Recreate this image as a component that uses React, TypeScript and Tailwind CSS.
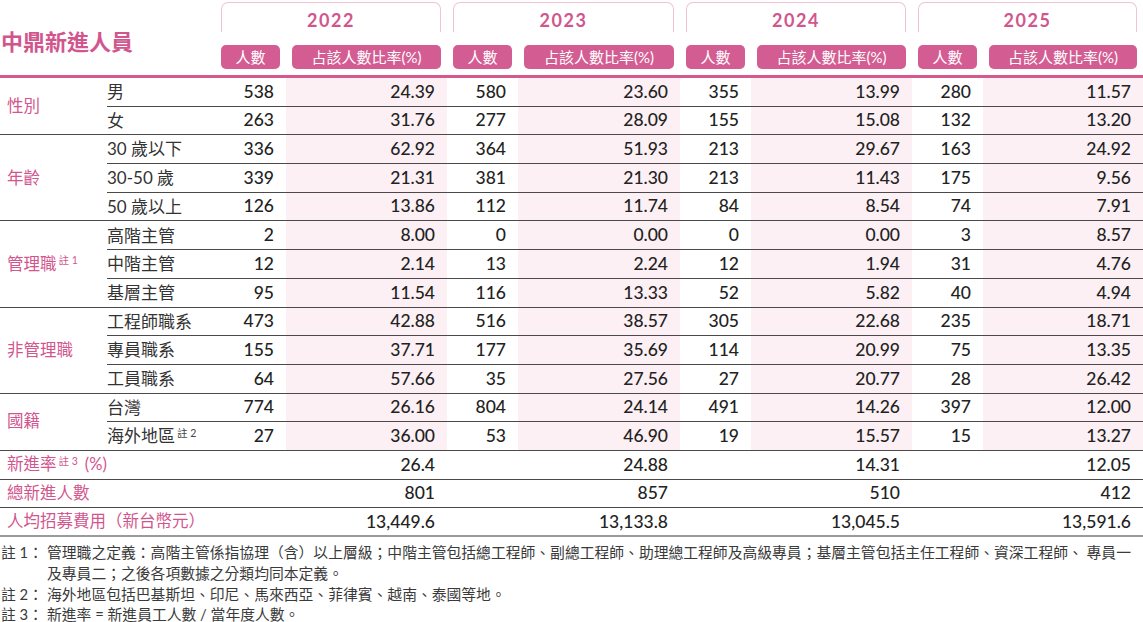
import React from "react";

const pink = "text-[#d2568e]";
const countW = ["w-[71px]", "w-[71px]", "w-[71px]", "w-[71px]"];
const pctW = ["w-[161px]", "w-[162px]", "w-[161px]", "w-[160px]"];
const blockW = ["w-[232px]", "w-[233px]", "w-[232px]", "w-[231px]"];
const years = ["2022", "2023", "2024", "2025"];

type Row = { label: React.ReactNode; v: [string, string][] };
type Group = { label: React.ReactNode; rows: Row[] };

const Note = ({ n, pinkish }: { n: number; pinkish?: boolean }) => (
  <sup className={`ml-[2px] text-[10.5px] ${pinkish ? pink : "text-[#444]"}`}>註 {n}</sup>
);

const groups: Group[] = [
  {
    label: "性別",
    rows: [
      { label: "男", v: [["538", "24.39"], ["580", "23.60"], ["355", "13.99"], ["280", "11.57"]] },
      { label: "女", v: [["263", "31.76"], ["277", "28.09"], ["155", "15.08"], ["132", "13.20"]] },
    ],
  },
  {
    label: "年齡",
    rows: [
      { label: "30 歲以下", v: [["336", "62.92"], ["364", "51.93"], ["213", "29.67"], ["163", "24.92"]] },
      { label: "30-50 歲", v: [["339", "21.31"], ["381", "21.30"], ["213", "11.43"], ["175", "9.56"]] },
      { label: "50 歲以上", v: [["126", "13.86"], ["112", "11.74"], ["84", "8.54"], ["74", "7.91"]] },
    ],
  },
  {
    label: (
      <>
        管理職
        <Note n={1} pinkish />
      </>
    ),
    rows: [
      { label: "高階主管", v: [["2", "8.00"], ["0", "0.00"], ["0", "0.00"], ["3", "8.57"]] },
      { label: "中階主管", v: [["12", "2.14"], ["13", "2.24"], ["12", "1.94"], ["31", "4.76"]] },
      { label: "基層主管", v: [["95", "11.54"], ["116", "13.33"], ["52", "5.82"], ["40", "4.94"]] },
    ],
  },
  {
    label: "非管理職",
    rows: [
      { label: "工程師職系", v: [["473", "42.88"], ["516", "38.57"], ["305", "22.68"], ["235", "18.71"]] },
      { label: "專員職系", v: [["155", "37.71"], ["177", "35.69"], ["114", "20.99"], ["75", "13.35"]] },
      { label: "工員職系", v: [["64", "57.66"], ["35", "27.56"], ["27", "20.77"], ["28", "26.42"]] },
    ],
  },
  {
    label: "國籍",
    rows: [
      { label: "台灣", v: [["774", "26.16"], ["804", "24.14"], ["491", "14.26"], ["397", "12.00"]] },
      {
        label: (
          <>
            海外地區
            <Note n={2} />
          </>
        ),
        v: [["27", "36.00"], ["53", "46.90"], ["19", "15.57"], ["15", "13.27"]],
      },
    ],
  },
];

const totals: { label: React.ReactNode; v: string[] }[] = [
  {
    label: (
      <>
        新進率
        <Note n={3} pinkish />
        <span className="ml-[7px]">(%)</span>
      </>
    ),
    v: ["26.4", "24.88", "14.31", "12.05"],
  },
  { label: "總新進人數", v: ["801", "857", "510", "412"] },
  { label: "人均招募費用（新台幣元）", v: ["13,449.6", "13,133.8", "13,045.5", "13,591.6"] },
];

export default function App() {
  return (
    <div
      className="w-[1143px] h-[622px] overflow-hidden bg-white text-[#222]"
      style={{ fontFamily: '"Lato", "Noto Sans CJK TC", sans-serif' }}
    >
      {/* header */}
      <div className="flex h-[75px]">
        <div className="w-[215px] pt-[27px] pl-[1px]">
          <h1 className={`text-[22px] font-bold leading-[30px] ${pink}`}>中鼎新進人員</h1>
        </div>
        {years.map((y, i) => (
          <div key={y} className={`${blockW[i]} flex flex-col`}>
            <div className="mx-[6px] mt-[2px] h-[30px] pt-[5px] rounded-t-[7px] border border-b-0 border-[#f2c3d6] flex items-center justify-center">
              <span className="text-[18px] font-bold tracking-[1.5px] text-[#d0578e]">{y}</span>
            </div>
            <div className="flex mt-[13px]">
              <div className={`${countW[i]} px-[6px]`}>
                <div className="h-[24px] rounded-[5px] bg-[#d35d93] text-white text-[15px] flex items-center justify-center">
                  人數
                </div>
              </div>
              <div className={`${pctW[i]} px-[6px]`}>
                <div className="h-[24px] rounded-[5px] bg-[#d35d93] text-white text-[15px] flex items-center justify-center">
                  占該人數比率(%)
                </div>
              </div>
            </div>
          </div>
        ))}
      </div>
      <div className="h-[3px] bg-[#d6588f]" />

      {/* groups */}
      {groups.map((g, gi) => (
        <div key={gi} className="flex border-b border-[#4a4a4a]">
          <div className={`w-[107px] flex items-center pl-[7px] text-[16.5px] ${pink}`}>
            <span>{g.label}</span>
          </div>
          <div className="flex-1 flex flex-col">
            {g.rows.map((r, ri) => (
              <div
                key={ri}
                className="flex h-[28.7px] border-b border-[#4a4a4a] last:border-b-0 last:h-[27.7px]"
              >
                <div className="w-[108px] flex items-center text-[17px] text-[#333]">
                  <span>{r.label}</span>
                </div>
                {r.v.map(([c, p], i) => (
                  <React.Fragment key={i}>
                    <div className={`${countW[i]} flex items-center justify-end pr-[12px] text-[17.5px] font-medium`}>
                      {c}
                    </div>
                    <div
                      className={`${pctW[i]} flex items-center justify-end pr-[12px] text-[17.5px] font-medium bg-[#fcf0f4]`}
                    >
                      {p}
                    </div>
                  </React.Fragment>
                ))}
              </div>
            ))}
          </div>
        </div>
      ))}

      {totals.map((t, ti) => (
        <div
          key={ti}
          className={`flex h-[28.7px] ${
            ti === totals.length - 1 ? "border-b-2 border-[#9a9a9a]" : "border-b border-[#4a4a4a]"
          }`}
        >
          <div className={`w-[215px] flex items-center pl-[7px] text-[16.5px] ${pink}`}>
            <span>{t.label}</span>
          </div>
          {t.v.map((v, i) => (
            <React.Fragment key={i}>
              <div className={countW[i]} />
              <div className={`${pctW[i]} flex items-center justify-end pr-[12px] text-[17.5px] font-medium`}>
                {v}
              </div>
            </React.Fragment>
          ))}
        </div>
      ))}

      {/* notes */}
      <div className="pt-[5px] text-[14.8px] text-[#3a3a3a] whitespace-nowrap">
        <div className="flex leading-[21px]">
          <span className="w-[47px] pl-[1px]">註 1：</span>
          <span>
            管理職之定義：高階主管係指協理（含）以上層級；中階主管包括總工程師、副總工程師、助理總工程師及高級專員；基層主管包括主任工程師、資深工程師、 專員一
            <br />
            及專員二；之後各項數據之分類均同本定義。
          </span>
        </div>
        <div className="flex leading-[20px]">
          <span className="w-[47px] pl-[1px]">註 2：</span>
          <span>海外地區包括巴基斯坦、印尼、馬來西亞、菲律賓、越南、泰國等地。</span>
        </div>
        <div className="flex leading-[20px]">
          <span className="w-[47px] pl-[1px]">註 3：</span>
          <span>新進率 = 新進員工人數 / 當年度人數。</span>
        </div>
      </div>
    </div>
  );
}
